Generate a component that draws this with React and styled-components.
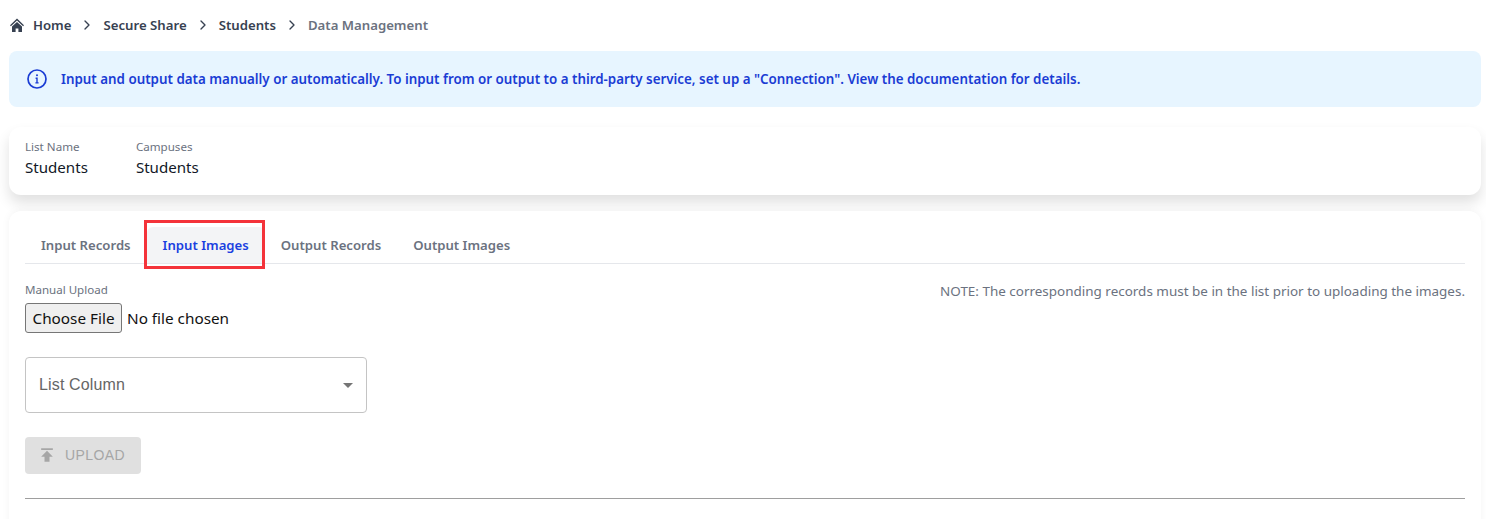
import React from 'react'
import styled, { createGlobalStyle } from 'styled-components'
import { FiChevronRight } from 'react-icons/fi'
import { MdPublish } from 'react-icons/md'

const GlobalStyle = createGlobalStyle`
  html, body {
    margin: 0;
    background: #fff;
    overflow: hidden;
  }
  * {
    box-sizing: border-box;
  }
`

const Page = styled.div`
  width: 1486px;
  height: 519px;
  overflow: hidden;
  padding: 0 5px 0 9px;
  font-family: 'Noto Sans', sans-serif;
`

const Breadcrumb = styled.nav`
  display: flex;
  align-items: center;
  height: 49px;
  margin-bottom: 2px;
  font-size: 13.2px;
  font-weight: 600;
  color: #374151;
`

const Crumb = styled.span`
  color: ${(p) => (p.$current ? '#6b7280' : '#374151')};
`

const Separator = styled(FiChevronRight)`
  width: 16px;
  height: 16px;
  margin: 0 8px;
  color: #374151;
`

const HomeSvg = styled.svg`
  width: 16px;
  height: 16px;
  margin-right: 8px;
  color: #374151;
`

const HomeIcon = () => (
  <HomeSvg viewBox='0 0 16 16' fill='currentColor'>
    <path d='M8 1.6 1 8.2l.9 1L8 3.5l6.1 5.7.9-1z' />
    <path d='M8 5 3 9.6V15h3.6v-3.6h2.8V15H13V9.6z' />
  </HomeSvg>
)

const Alert = styled.div`
  display: flex;
  align-items: center;
  height: 56px;
  padding: 0 17px;
  gap: 13px;
  border-radius: 8px;
  background: #e7f5ff;
  color: #1a3cd4;
  font-size: 13.36px;
  font-weight: 600;
`

const InfoSvg = styled.svg`
  width: 22px;
  height: 22px;
  flex-shrink: 0;
`

const InfoIcon = () => (
  <InfoSvg viewBox='0 0 22 22' fill='none' stroke='currentColor' strokeWidth='1.7'>
    <circle cx='11' cy='11' r='9' />
    <path d='M9.6 10.2H11v4.6M9.4 14.9h3.2' strokeWidth='1.4' />
    <circle cx='11' cy='7.3' r='1' fill='currentColor' stroke='none' />
  </InfoSvg>
)

const SummaryCard = styled.section`
  display: flex;
  gap: 48px;
  height: 68px;
  margin-top: 20px;
  padding: 12px 16px 0;
  border-radius: 12px;
  background: #fff;
  box-shadow: 0 8px 14px rgba(0, 0, 0, 0.12);
`

const Field = styled.div`
  display: flex;
  flex-direction: column;
`

const FieldLabel = styled.span`
  font-size: 11.6px;
  line-height: 16px;
  color: #6b7280;
`

const FieldValue = styled.span`
  font-size: 15.1px;
  line-height: 24px;
  color: #111827;
`

const MainCard = styled.section`
  margin-top: 16px;
  padding: 16px 16px 0;
  height: 320px;
  border-radius: 12px;
  background: #fff;
  box-shadow: 0 0 8px rgba(0, 0, 0, 0.05);
`

const Tabs = styled.div`
  display: flex;
  height: 37px;
  border-bottom: 1px solid #e5e7eb;
`

const Tab = styled.div`
  position: relative;
  display: flex;
  align-items: center;
  padding: 0 16px;
  border-radius: 6px 6px 0 0;
  font-size: 13.15px;
  font-weight: 600;
  color: ${(p) => (p.$active ? '#1a3fe0' : '#6b7280')};
  background: ${(p) => (p.$active ? '#f3f4f6' : 'transparent')};
`

const Highlight = styled.span`
  position: absolute;
  left: -3px;
  right: 0;
  top: -7px;
  bottom: -6px;
  border: 3px solid #f4333a;
  pointer-events: none;
`

const UploadRow = styled.div`
  display: flex;
  justify-content: space-between;
  margin-top: 18px;
`

const UploadLabel = styled.div`
  font-size: 11.55px;
  line-height: 16px;
  color: #6b7280;
`

const FileInput = styled.input`
  display: block;
  margin-top: 5px;
  font-family: 'Noto Sans', sans-serif;
  font-size: 15.3px;
  color: #111;

  &::file-selector-button {
    height: 30px;
    width: 97px;
    margin-right: 5px;
    padding: 0;
    border: 1px solid #767676;
    border-radius: 3px;
    background: #efefef;
    font: inherit;
    color: #111;
  }
`

const Note = styled.div`
  margin-top: 1px;
  font-size: 13.46px;
  line-height: 16px;
  color: #6b7280;
`

const Select = styled.div`
  display: flex;
  align-items: center;
  justify-content: space-between;
  width: 342px;
  height: 56px;
  margin-top: 24px;
  padding: 0 13px;
  border: 1px solid #c4c4c4;
  border-radius: 4px;
  font-family: 'Liberation Sans', Arial, sans-serif;
  font-size: 16px;
  letter-spacing: 0.15px;
  color: #666;
`

const Caret = styled.span`
  width: 0;
  height: 0;
  border-left: 5px solid transparent;
  border-right: 5px solid transparent;
  border-top: 5px solid #757575;
`

const UploadButton = styled.button`
  display: flex;
  align-items: center;
  gap: 8px;
  width: 116px;
  height: 37px;
  margin-top: 24px;
  padding: 0 0 1px 12px;
  border: 0;
  border-radius: 4px;
  background: #e0e0e0;
  color: #a6a6a6;
  font-family: 'Liberation Sans', Arial, sans-serif;
  font-size: 14px;
  letter-spacing: 0.4px;
`

const Divider = styled.hr`
  margin: 24px 0 0;
  border: 0;
  border-top: 1px solid #9e9e9e;
`

const tabs = ['Input Records', 'Input Images', 'Output Records', 'Output Images']

export default function App() {
  return (
    <Page>
      <GlobalStyle />
      <Breadcrumb>
        <HomeIcon />
        <Crumb>Home</Crumb>
        <Separator />
        <Crumb>Secure Share</Crumb>
        <Separator />
        <Crumb>Students</Crumb>
        <Separator />
        <Crumb $current>Data Management</Crumb>
      </Breadcrumb>

      <Alert>
        <InfoIcon />
        Input and output data manually or automatically. To input from or output to a third-party service, set up a "Connection". View the documentation for details.
      </Alert>

      <SummaryCard>
        <Field>
          <FieldLabel>List Name</FieldLabel>
          <FieldValue>Students</FieldValue>
        </Field>
        <Field>
          <FieldLabel>Campuses</FieldLabel>
          <FieldValue>Students</FieldValue>
        </Field>
      </SummaryCard>

      <MainCard>
        <Tabs>
          {tabs.map((t) => (
            <Tab key={t} $active={t === 'Input Images'}>
              {t}
              {t === 'Input Images' && <Highlight />}
            </Tab>
          ))}
        </Tabs>
        <UploadRow>
          <div>
            <UploadLabel>Manual Upload</UploadLabel>
            <FileInput type='file' />
          </div>
          <Note>NOTE: The corresponding records must be in the list prior to uploading the images.</Note>
        </UploadRow>
        <Select>
          List Column
          <Caret />
        </Select>
        <UploadButton disabled>
          <MdPublish size={20} />
          UPLOAD
        </UploadButton>
        <Divider />
      </MainCard>
    </Page>
  )
}
